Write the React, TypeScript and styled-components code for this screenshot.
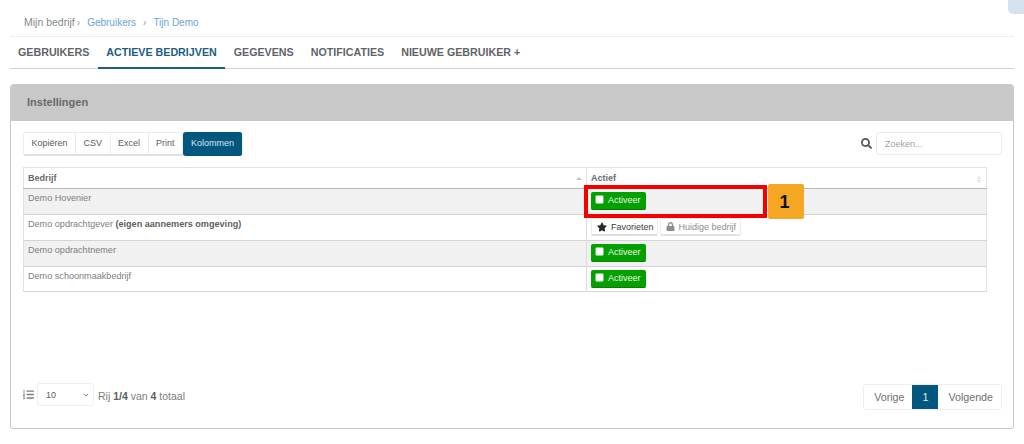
import styled, { createGlobalStyle } from "styled-components";
import { FaListOl, FaLock, FaSearch, FaSquare, FaStar } from "react-icons/fa";

const GlobalStyle = createGlobalStyle`
  html, body {
    margin: 0;
    padding: 0;
    background: #ffffff;
    font-family: "Liberation Sans", Arial, sans-serif;
    color: #676a6c;
  }
  * {
    box-sizing: border-box;
  }
`;

const tabs = ["GEBRUIKERS", "ACTIEVE BEDRIJVEN", "GEGEVENS", "NOTIFICATIES", "NIEUWE GEBRUIKER +"];
const exportButtons = ["Kopiëren", "CSV", "Excel", "Print"];

export default function App() {
  return (
    <>
      <GlobalStyle />
      <CornerTab />
      <Page>
        <Breadcrumb>
          <Root>Mijn bedrijf</Root>
          <Chevron>›</Chevron>
          <Crumb href="#">Gebruikers</Crumb>
          <Chevron $wide>›</Chevron>
          <Crumb href="#">Tijn Demo</Crumb>
        </Breadcrumb>

        <Tabs>
          {tabs.map((tab) => (
            <Tab key={tab} $active={tab === "ACTIEVE BEDRIJVEN"}>{tab}</Tab>
          ))}
        </Tabs>

        <Panel>
          <PanelHeader>Instellingen</PanelHeader>
          <PanelBody>
            <Toolbar>
              <ButtonGroup>
                {exportButtons.map((label) => (
                  <ToolButton key={label}>{label}</ToolButton>
                ))}
                <ToolButton $active>Kolommen</ToolButton>
              </ButtonGroup>
              <SearchBox>
                <SearchIcon><FaSearch size={11} /></SearchIcon>
                <SearchInput placeholder="Zoeken..." />
              </SearchBox>
            </Toolbar>

            <Table>
              <thead>
                <tr>
                  <HeadCell $width={563}>
                    Bedrijf
                    <SortUp />
                  </HeadCell>
                  <HeadCell>
                    Actief
                    <SortBoth><i /><i /></SortBoth>
                  </HeadCell>
                </tr>
              </thead>
              <tbody>
                <Row $striped>
                  <Cell>Demo Hovenier</Cell>
                  <ActionCell>
                    <ActivateButton><FaSquare size={9} />Activeer</ActivateButton>
                    <Highlight />
                    <Badge>1</Badge>
                  </ActionCell>
                </Row>
                <Row>
                  <Cell>Demo opdrachtgever <strong>(eigen aannemers omgeving)</strong></Cell>
                  <ActionCell>
                    <ActionRow>
                      <FavButton><FaStar size={10} />Favorieten</FavButton>
                      <CurrentButton><FaLock size={9} />Huidige bedrijf</CurrentButton>
                    </ActionRow>
                  </ActionCell>
                </Row>
                <Row $striped>
                  <Cell>Demo opdrachtnemer</Cell>
                  <ActionCell>
                    <ActivateButton><FaSquare size={9} />Activeer</ActivateButton>
                  </ActionCell>
                </Row>
                <Row>
                  <Cell>Demo schoonmaakbedrijf</Cell>
                  <ActionCell>
                    <ActivateButton><FaSquare size={9} />Activeer</ActivateButton>
                  </ActionCell>
                </Row>
              </tbody>
            </Table>

            <Footer>
              <RowsInfo>
                <FaListOl size={11} color="#7b7e80" />
                <PageSize>
                  10
                  <SelectArrow viewBox="0 0 8 5"><path d="M1 1l3 3 3-3" /></SelectArrow>
                </PageSize>
                <RowsText>Rij <b>1/4</b> van <b>4</b> totaal</RowsText>
              </RowsInfo>
              <Pagination>
                <PageLink>Vorige</PageLink>
                <PageLink $active>1</PageLink>
                <PageLink>Volgende</PageLink>
              </Pagination>
            </Footer>
          </PanelBody>
        </Panel>
      </Page>
    </>
  );
}

const Page = styled.div`
  width: 1024px;
  height: 444px;
  padding: 0 10px;
  overflow: hidden;
`;

const CornerTab = styled.div`
  position: absolute;
  top: 0;
  right: 0;
  width: 16px;
  height: 14px;
  background: #d5e3f1;
  border-bottom-left-radius: 5px;
`;

const Breadcrumb = styled.div`
  display: flex;
  align-items: center;
  height: 37px;
  padding: 8px 0 0 14px;
  font-size: 10px;
  color: #85888a;
  border-bottom: 1px solid #eeeeee;
`;

const Root = styled.span`
  font-size: 10.5px;
`;

const Chevron = styled.span<{ $wide?: boolean }>`
  margin: 0 7px 0 ${(p) => (p.$wide ? "7px" : "2px")};
  color: #9a9a9a;
`;

const Crumb = styled.a`
  color: #6ba3d4;
  text-decoration: none;
`;

const Tabs = styled.div`
  display: flex;
  height: 32px;
  border-bottom: 1px solid #cfcfcf;
`;

const Tab = styled.div<{ $active?: boolean }>`
  height: 32px;
  padding: 9px 8px 0;
  margin-right: 1px;
  font-size: 10.7px;
  font-weight: 700;
  white-space: nowrap;
  color: ${(p) => (p.$active ? "#215d82" : "#5f6468")};
  border-bottom: 2px solid ${(p) => (p.$active ? "#215d82" : "transparent")};
`;

const Panel = styled.div`
  margin-top: 15px;
  height: 345px;
  border: 1px solid #c8c8c8;
  border-top: 0;
  border-radius: 4px;
  overflow: hidden;
  display: flex;
  flex-direction: column;
`;

const PanelHeader = styled.div`
  height: 37px;
  margin: 0 -1px;
  padding: 12px 0 0 17px;
  background: #c8c8c8;
  font-size: 11px;
  font-weight: 700;
  color: #676a6c;
`;

const PanelBody = styled.div`
  flex: 1;
  display: flex;
  flex-direction: column;
  padding: 11px 11px 17px 11px;
`;

const Toolbar = styled.div`
  display: flex;
  justify-content: space-between;
  align-items: flex-start;
`;

const ButtonGroup = styled.div`
  display: flex;
  height: 24px;
  margin-left: 1px;
  border: 1px solid #ececec;
  border-bottom: 2px solid #e0e0e0;
  border-radius: 3px;
`;

const ToolButton = styled.div<{ $active?: boolean }>`
  padding: ${(p) => (p.$active ? "6px 8px 0" : "5px 7.5px 0")};
  font-size: 9px;
  color: ${(p) => (p.$active ? "#d8e6ee" : "#5a5d5f")};
  background: ${(p) => (p.$active ? "#02577f" : "#ffffff")};
  border-right: 1px solid #ececec;
  border-radius: ${(p) => (p.$active ? "3px" : "0")};
  margin: ${(p) => (p.$active ? "-1px -1px -2px 0" : "0")};
`;

const SearchBox = styled.div`
  display: flex;
  align-items: center;
  gap: 4px;
`;

const SearchIcon = styled.span`
  display: flex;
  color: #53565a;
`;

const SearchInput = styled.input`
  width: 126px;
  height: 23px;
  padding: 0 8px;
  font-family: inherit;
  font-size: 9px;
  border: 1px solid #ececec;
  border-radius: 3px;
  outline: none;
  &::placeholder {
    color: #a0a3a5;
  }
`;

const Table = styled.table`
  width: 964px;
  margin: 11px 0 0 1px;
  table-layout: fixed;
  border-collapse: collapse;
  font-size: 9.1px;
  border: 1px solid #e2e2e2;
`;

const HeadCell = styled.th<{ $width?: number }>`
  position: relative;
  width: ${(p) => (p.$width ? `${p.$width}px` : "auto")};
  height: 21px;
  padding: 0 4px;
  text-align: left;
  font-size: 9px;
  font-weight: 700;
  color: #676a6c;
  border-bottom: 1px solid #b9b9b9;
  border-left: 1px solid #e2e2e2;
`;

const SortUp = styled.span`
  position: absolute;
  right: 4px;
  top: 9px;
  border-left: 3px solid transparent;
  border-right: 3px solid transparent;
  border-bottom: 3px solid #c4c4c4;
`;

const SortBoth = styled.span`
  position: absolute;
  right: 5px;
  top: 8px;
  display: flex;
  flex-direction: column;
  gap: 1px;
  i {
    border-left: 2.5px solid transparent;
    border-right: 2.5px solid transparent;
    border-bottom: 3px solid #dddddd;
  }
  i:last-child {
    border-bottom: 0;
    border-top: 3px solid #dddddd;
  }
`;

const Row = styled.tr<{ $striped?: boolean }>`
  height: 26px;
  background: ${(p) => (p.$striped ? "#f1f1f1" : "#ffffff")};
  border-bottom: 1px solid #d4d4d4;
  &:last-child {
    height: 25px;
  }
`;

const Cell = styled.td`
  padding: 4px 4px 0;
  vertical-align: top;
  color: #7b7e80;
  strong {
    color: #5c6063;
  }
`;

const ActionCell = styled.td`
  position: relative;
  padding: 3px 4px 0;
  vertical-align: top;
  border-left: 1px solid #dcdcdc;
`;

const ActionRow = styled.div`
  display: flex;
  gap: 2px;
`;

const BaseButton = styled.div`
  display: inline-flex;
  align-items: center;
  gap: 4px;
  height: 18px;
  font-size: 9px;
  border-radius: 2px;
`;

const ActivateButton = styled(BaseButton)`
  padding: 0 0 2px 4px;
  width: 55px;
  color: #eaf6ea;
  background: #03a000;
  border-bottom: 1px solid #067f04;
  svg {
    color: #ffffff;
  }
`;

const FavButton = styled(BaseButton)`
  padding: 0 3px 0 5px;
  color: #3b3e40;
  background: #ffffff;
  border: 1px solid #ececec;
  border-bottom: 2px solid #dddddd;
  svg {
    color: #26292b;
  }
`;

const CurrentButton = styled(BaseButton)`
  padding: 0 4px 0 5px;
  color: #8b8e90;
  background: #ffffff;
  border: 1px solid #ececec;
  border-bottom: 2px solid #e4e4e4;
`;

const Highlight = styled.div`
  position: absolute;
  left: -3px;
  top: -4px;
  width: 183px;
  height: 33px;
  border: 4px solid #f40000;
`;

const Badge = styled.div`
  position: absolute;
  left: 181px;
  top: -5px;
  width: 36px;
  height: 35px;
  padding: 2px 3px 0 0;
  display: flex;
  align-items: center;
  justify-content: center;
  background: #f5a623;
  border-radius: 2px;
  font-size: 18px;
  font-weight: 700;
  color: #111111;
`;

const Footer = styled.div`
  margin-top: auto;
  display: flex;
  justify-content: space-between;
  align-items: flex-start;
  padding-bottom: 1px;
`;

const RowsInfo = styled.div`
  display: flex;
  align-items: center;
  gap: 3px;
  margin-top: -1px;
  padding-left: 1px;
  font-size: 10.5px;
  color: #7b7e80;
  b {
    color: #5c6063;
  }
`;

const RowsText = styled.span`
  margin-top: 2px;
`;

const PageSize = styled.div`
  display: flex;
  align-items: center;
  justify-content: space-between;
  width: 57px;
  height: 23px;
  padding: 0 4px 0 8px;
  margin-right: 1px;
  font-size: 9px;
  color: #5a5d5f;
  border: 1px solid #eeeeee;
  border-radius: 3px;
`;

const SelectArrow = styled.svg`
  width: 6px;
  height: 4px;
  fill: none;
  stroke: #6d7073;
  stroke-width: 1.2;
`;

const Pagination = styled.div`
  display: flex;
  height: 26px;
  border: 1px solid #eeeeee;
  border-radius: 3px;
`;

const PageLink = styled.div<{ $active?: boolean }>`
  display: flex;
  align-items: center;
  padding: ${(p) => (p.$active ? "0 10px" : "0 8px 0 10px")};
  font-size: 10.7px;
  color: ${(p) => (p.$active ? "#dfeaf0" : "#6d7073")};
  background: ${(p) => (p.$active ? "#02577f" : "#ffffff")};
`;
